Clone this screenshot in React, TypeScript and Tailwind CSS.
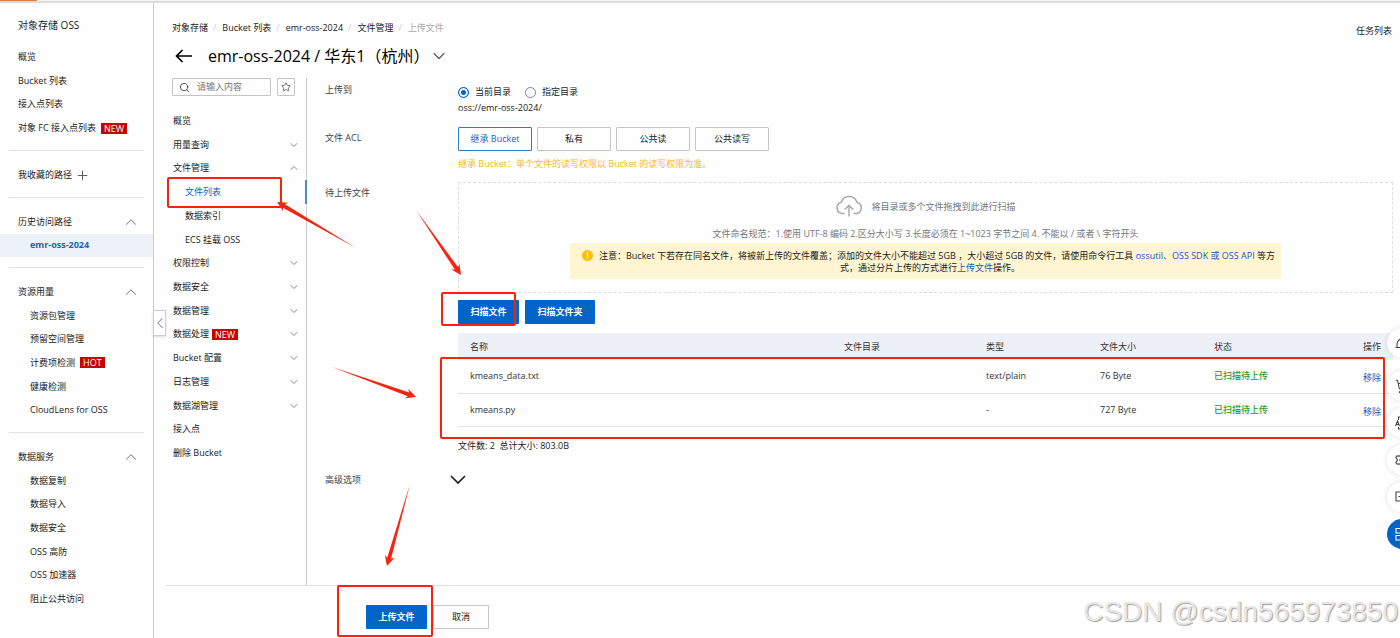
import { useState } from "react";
import type { ReactNode } from "react";
import { ChevronDown, ChevronLeft, ChevronUp, Plus, Search, Settings, ShoppingCart, Star } from "lucide-react";

function Badge({ children }: { children: ReactNode }) {
  return (
    <span className="flex h-[11px] items-center bg-[#c80000] px-[3px] text-[9px] leading-none text-white">
      {children}
    </span>
  );
}

type Item = { label: string; badge?: string };

function SideGroup({
  title,
  items,
  className,
  activeLabel,
}: {
  title: string;
  items: Item[];
  className: string;
  activeLabel?: string;
}) {
  return (
    <section className={`flex flex-col ${className}`}>
      <button type="button" className="flex flex-1 items-center justify-between pr-[13px] pl-[18px]">
        {title}
        <ChevronUp size={18} strokeWidth={1.4} className="text-[#888]" />
      </button>
      {items.map((item) => (
        <a
          key={item.label}
          href="#"
          className={
            item.label === activeLabel
              ? "flex flex-1 items-center bg-[#edf2f8] pl-[30px] font-bold text-[#1b63bd]"
              : "flex flex-1 items-center gap-[5px] pl-[30px]"
          }
        >
          {item.label}
          {item.badge && <Badge>{item.badge}</Badge>}
        </a>
      ))}
    </section>
  );
}

function Separator() {
  return <hr className="mx-[9px] mt-[10px] mb-[12px] border-[#e2e2e2]" />;
}

function Sidebar() {
  const top: Item[] = [
    { label: "概览" },
    { label: "Bucket 列表" },
    { label: "接入点列表" },
    { label: "对象 FC 接入点列表", badge: "NEW" },
  ];
  return (
    <aside className="relative w-[154px] shrink-0 border-r border-[#ccc]">
      <h1 className="pt-[10px] pl-[18px] text-[10px] leading-[24px]">对象存储 OSS</h1>
      <nav className="mt-[8px] flex flex-col">
        <div className="flex h-[95px] flex-col">
          {top.map((item) => (
            <a key={item.label} href="#" className="flex flex-1 items-center gap-[5px] pl-[18px]">
              {item.label}
              {item.badge && <Badge>{item.badge}</Badge>}
            </a>
          ))}
        </div>
        <Separator />
        <div className="flex h-[24px] items-center gap-[3px] pl-[18px]">
          我收藏的路径
          <button type="button" aria-label="添加路径">
            <Plus size={15} strokeWidth={1.5} className="text-[#555]" />
          </button>
        </div>
        <Separator />
        <SideGroup
          title="历史访问路径"
          className="h-[47px]"
          activeLabel="emr-oss-2024"
          items={[{ label: "emr-oss-2024" }]}
        />
        <Separator />
        <SideGroup
          title="资源用量"
          className="h-[142px]"
          items={[
            { label: "资源包管理" },
            { label: "预留空间管理" },
            { label: "计费项检测", badge: "HOT" },
            { label: "健康检测" },
            { label: "CloudLens for OSS" },
          ]}
        />
        <Separator />
        <SideGroup
          title="数据服务"
          className="h-[166px]"
          items={[
            { label: "数据复制" },
            { label: "数据导入" },
            { label: "数据安全" },
            { label: "OSS 高防" },
            { label: "OSS 加速器" },
            { label: "阻止公共访问" },
          ]}
        />
      </nav>
      <button
        type="button"
        aria-label="收起侧栏"
        className="absolute top-[307px] left-[153px] flex h-[26px] w-[13px] items-center justify-center border border-[#ccc] bg-white text-[#888] shadow-sm"
      >
        <ChevronLeft size={18} strokeWidth={1.4} className="shrink-0" />
      </button>
    </aside>
  );
}

type BucketItem = { label: string; badge?: string; open?: boolean; child?: boolean; active?: boolean };

const bucketItems: BucketItem[] = [
  { label: "概览" },
  { label: "用量查询", open: false },
  { label: "文件管理", open: true },
  { label: "文件列表", child: true, active: true },
  { label: "数据索引", child: true },
  { label: "ECS 挂载 OSS", child: true },
  { label: "权限控制", open: false },
  { label: "数据安全", open: false },
  { label: "数据管理", open: false },
  { label: "数据处理", open: false, badge: "NEW" },
  { label: "Bucket 配置", open: false },
  { label: "日志管理", open: false },
  { label: "数据湖管理", open: false },
  { label: "接入点" },
  { label: "删除 Bucket" },
];

function BucketNav() {
  return (
    <div className="w-[141px] shrink-0 border-r border-[#ccc] pl-[6px]">
      <div className="flex gap-[6px]">
        <label className="flex h-[18px] w-[99px] items-center gap-[7px] rounded-[1px] border border-[#c4c4c4] pl-[6px]">
          <Search size={11} strokeWidth={2} className="shrink-0 text-[#444]" />
          <input
            aria-label="搜索"
            placeholder="请输入内容"
            className="w-full min-w-0 bg-transparent outline-none placeholder:text-[#777]"
          />
        </label>
        <button
          type="button"
          aria-label="收藏"
          className="flex h-[18px] w-[18px] items-center justify-center rounded-[1px] border border-[#c4c4c4] text-[#555]"
        >
          <Star size={10} strokeWidth={2} />
        </button>
      </div>
      <nav className="mt-[13px] flex h-[356px] flex-col">
        {bucketItems.map((item) => (
          <a
            key={item.label}
            href="#"
            className={`flex flex-1 items-center gap-[3px] ${item.child ? "pl-[13px]" : "pl-px"} ${
              item.active ? "-mr-px border-r-2 border-[#4a8cc4] text-[#0f62c4]" : "pr-[6px]"
            }`}
          >
            {item.label}
            {item.badge && <Badge>{item.badge}</Badge>}
            {item.open === false && (
              <ChevronDown size={12} strokeWidth={1.8} className="ml-auto text-[#777]" />
            )}
            {item.open === true && <ChevronUp size={12} strokeWidth={1.8} className="ml-auto text-[#777]" />}
          </a>
        ))}
      </nav>
    </div>
  );
}

function Row({ label, children, className }: { label: string; children: ReactNode; className: string }) {
  return (
    <div className={`flex ${className}`}>
      <div className="w-[133px] shrink-0 text-[#444]">{label}</div>
      <div className="min-w-0 flex-1">{children}</div>
    </div>
  );
}

const files = [
  { name: "kmeans_data.txt", type: "text/plain", size: "76 Byte" },
  { name: "kmeans.py", type: "-", size: "727 Byte" },
];

function FileTable() {
  return (
    <table className="mt-[9px] w-full table-fixed border-collapse text-left text-[#333]">
      <thead>
        <tr className="h-[27px] bg-[#edf1f7]">
          <th className="pl-[12px] font-normal">名称</th>
          <th className="w-[142px] pl-[12px] font-normal">文件目录</th>
          <th className="w-[114px] pl-[12px] font-normal">类型</th>
          <th className="w-[114px] pl-[12px] font-normal">文件大小</th>
          <th className="w-[149px] pl-[12px] font-normal">状态</th>
          <th className="w-[42px] pl-[12px] font-normal">操作</th>
        </tr>
      </thead>
      <tbody>
        {files.map((f) => (
          <tr key={f.name} className="h-[33px] border-b border-[#e2e2e2]">
            <td className="pl-[12px]">{f.name}</td>
            <td />
            <td className="pl-[12px]">{f.type}</td>
            <td className="pl-[12px]">{f.size}</td>
            <td className="pl-[12px] font-medium text-[#1a9c1a]">已扫描待上传</td>
            <td className="pt-[4px] pl-[12px]">
              <button type="button" className="text-[#1b57b5]">
                移除
              </button>
            </td>
          </tr>
        ))}
      </tbody>
    </table>
  );
}

const primary = "h-[24px] rounded-[1px] bg-[#0064c8] font-bold text-white";
const link = "text-[#1b57b5]";

function Radio({ label, checked, onSelect }: { label: string; checked: boolean; onSelect: () => void }) {
  return (
    <label className="flex items-center gap-[6px]">
      <input
        type="radio"
        name="target"
        checked={checked}
        onChange={onSelect}
        className="h-[11px] w-[11px] appearance-none rounded-full border border-[#6a86b8] bg-white checked:border-[#0064c8] checked:bg-[#0064c8] checked:shadow-[inset_0_0_0_2px_#fff]"
      />
      {label}
    </label>
  );
}

function UploadForm() {
  const [target, setTarget] = useState("当前目录");
  const [acl, setAcl] = useState("继承 Bucket");
  return (
    <form className="min-w-0 flex-1 pr-[7px] pl-[18px]" onSubmit={(e) => e.preventDefault()}>
      <Row label="上传到" className="h-[48px] pt-[6px]">
        <div className="flex items-center gap-[14px] pt-[2px]">
          {["当前目录", "指定目录"].map((t) => (
            <Radio key={t} label={t} checked={t === target} onSelect={() => setTarget(t)} />
          ))}
        </div>
        <div className="mt-[4px]">oss://emr-oss-2024/</div>
      </Row>
      <Row label="文件 ACL" className="h-[56px] pt-[6px]">
        <div className="-mt-[5px] flex gap-[5px]">
          {["继承 Bucket", "私有", "公共读", "公共读写"].map((a) => (
            <button
              key={a}
              type="button"
              onClick={() => setAcl(a)}
              className={`h-[24px] w-[74px] rounded-[1px] border ${
                a === acl ? "border-[#2d7dc8] text-[#1b63bd]" : "border-[#c4c4c4]"
              }`}
            >
              {a}
            </button>
          ))}
        </div>
        <p className="mt-[7px] text-[#f8b62a]">继承 Bucket：单个文件的读写权限以 Bucket 的读写权限为准。</p>
      </Row>
      <Row label="待上传文件" className="pt-[5px]">
        <div className="-mt-[5px] flex h-[111px] flex-col items-center border border-dashed border-[#dedede] pt-[12px]">
          <div className="flex items-center gap-[8px] text-[#777]">
            <svg width="28" height="24" viewBox="0 0 28 24" fill="none" stroke="#aaa" strokeWidth="1.5">
              <path d="M9.5 18.5H7A5.8 5.8 0 0 1 6.2 7.2 8.3 8.3 0 0 1 22 7.2 5.8 5.8 0 0 1 21.5 18.5H18.5" />
              <path d="M14 21.5V10.5M9.8 14.5 14 10.2 18.2 14.5" />
            </svg>
            将目录或多个文件拖拽到此进行扫描
          </div>
          <p className="mt-[9px] text-[#777]">
            文件命名规范：1.使用 UTF-8 编码 2.区分大小写 3.长度必须在 1~1023 字节之间 4. 不能以 / 或者 \ 字符开头
          </p>
          <div className="mt-[3px] flex h-[36px] w-[711px] gap-[6px] rounded-[1px] bg-[#fff5d1] pt-[7px] pr-[20px] pl-[12px]">
            <svg width="11" height="11" viewBox="0 0 11 11" className="shrink-0">
              <circle cx="5.5" cy="5.5" r="5.5" fill="#fac00a" />
              <path d="M5.5 2.2V6.2M5.5 7.4V8.8" stroke="#fff" strokeWidth="1.3" />
            </svg>
            <p className="min-w-0 flex-1 text-center whitespace-nowrap">
              注意：Bucket 下若存在同名文件，将被新上传的文件覆盖；添加的文件大小不能超过 5GB ，大小超过 5GB
              的文件，请使用命令行工具{" "}
              <a href="#" className={link}>
                ossutil
              </a>
              <span className={link}>、</span>
              <a href="#" className={link}>
                OSS SDK 或 OSS API
              </a>{" "}
              等方
              <br />
              式，通过分片上传的方式进行
              <a href="#" className={link}>
                上传文件
              </a>
              操作。
            </p>
          </div>
        </div>
        <div className="mt-[7px] flex gap-[6px]">
          <button type="button" className={`w-[61px] ${primary}`}>
            扫描文件
          </button>
          <button type="button" className={`w-[70px] ${primary}`}>
            扫描文件夹
          </button>
        </div>
        <FileTable />
        <p className="mt-[13px] whitespace-pre">文件数: 2  总计大小: 803.0B</p>
      </Row>
      <Row label="高级选项" className="pt-[22px]">
        <button type="button" aria-label="展开高级选项" className="-ml-[9px] block">
          <svg width="18" height="12" viewBox="0 0 18 12" fill="none" stroke="#222" strokeWidth="1.7">
            <path d="M2 2 9 9 16 2" />
          </svg>
        </button>
      </Row>
    </form>
  );
}

function Arrow({ from, to }: { from: [number, number]; to: [number, number] }) {
  const length = Math.hypot(to[0] - from[0], to[1] - from[1]);
  const ux = (to[0] - from[0]) / length;
  const uy = (to[1] - from[1]) / length;
  const at = (back: number, side: number) =>
    `${to[0] - ux * back - uy * side},${to[1] - uy * back + ux * side}`;
  const points = [at(length, 0), at(8, 2), at(10, 5), at(0, 0), at(10, -5), at(8, -2)].join(" ");
  return <polygon points={points} fill="#f8230f" />;
}

function Annotations() {
  return (
    <svg
      className="pointer-events-none absolute top-0 left-0"
      width="1400"
      height="638"
      fill="none"
      stroke="#f8230f"
      strokeWidth="2"
    >
      <rect x="168" y="178" width="113" height="29" rx="1" />
      <rect x="442" y="293" width="73" height="32" rx="1" />
      <rect x="441" y="358" width="943" height="80" rx="1" />
      <rect x="338" y="586" width="94" height="50" rx="1" />
      <g stroke="none">
        <Arrow from={[356, 248]} to={[277, 202]} />
        <Arrow from={[416, 210]} to={[461, 275]} />
        <Arrow from={[332, 367]} to={[416, 397]} />
        <Arrow from={[410, 484]} to={[387, 566]} />
      </g>
    </svg>
  );
}

function Glyph({ d }: { d: string }) {
  return (
    <svg width="14" height="14" viewBox="0 0 14 14" fill="none" stroke="currentColor" strokeWidth="1.1">
      <path d={d} />
    </svg>
  );
}

function FloatingTools() {
  const round = "flex h-[30px] w-[30px] items-center justify-center rounded-full";
  const light = `${round} bg-white text-[#444] shadow-[0_0_5px_rgba(0,0,0,0.13)]`;
  const tools = [
    { label: "购物车", icon: <ShoppingCart size={15} strokeWidth={1.7} /> },
    { label: "应用", icon: <Glyph d="M3.5 4V1H11V13H3.5V11M.5 10 2.5 5 4.5 10M1.2 8.5H3.8" /> },
    { label: "设置", icon: <Settings size={16} strokeWidth={1.7} /> },
    { label: "反馈", icon: <Glyph d="M1 2H13V11H9L7 13 5 11H1ZM3.5 6.5H5M6.5 6.5H8M9.5 6.5H11" /> },
  ];
  return (
    <div className="absolute top-[328px] -right-[17px] flex flex-col gap-[7px]">
      <button type="button" aria-label="通知" className={`mb-[6px] ${light}`}>
        <Glyph d="M.5 11.5H13.5M2 11.5V8.5A5 5.5 0 0 1 12 8.5V11.5M7 3V1.5" />
      </button>
      {tools.map((t) => (
        <button key={t.label} type="button" aria-label={t.label} className={light}>
          {t.icon}
        </button>
      ))}
      <button type="button" aria-label="全部工具" className={`${round} bg-[#0064c8] text-white`}>
        <Glyph d="M1 1.5H6V6H1ZM1 8.5H6V13H1ZM8.5 1.5H13V6H8.5ZM8.5 8.5H13V13H8.5Z" />
      </button>
    </div>
  );
}

export default function App() {
  const crumbs = ["对象存储", "Bucket 列表", "emr-oss-2024", "文件管理"];
  return (
    <div className="relative flex min-h-screen flex-col overflow-hidden bg-[#fefefe] font-['Open_Sans','Noto_Sans_CJK_SC',sans-serif] text-[9px] leading-[12px] text-[#222]">
      <div className="flex h-[3px] border-b-2 border-[#dcdcdc] bg-[#f2f2f2]">
        <div className="h-px w-[37px] bg-[#e07a3c]" />
      </div>
      <div className="flex flex-1">
        <Sidebar />
        <main className="flex min-w-0 flex-1 flex-col pl-[12px]">
          <header className="flex justify-between pr-[8px] pl-[6px]">
            <div>
              <nav aria-label="路径" className="mt-[19px] flex gap-[6px]">
                {crumbs.map((c) => (
                  <span key={c} className="flex gap-[5px]">
                    <a href="#">{c}</a>
                    <span className="text-[#ccc]">/</span>
                  </span>
                ))}
                <span className="text-[#aaa]">上传文件</span>
              </nav>
              <div className="mt-[10px] flex h-[24px] items-center">
                <button type="button" aria-label="返回" className="pl-[3px]">
                  <svg width="18" height="14" viewBox="0 0 18 14" fill="none" stroke="#000" strokeWidth="1.7">
                    <path d="M17 7H1.5M7.5 1 1.5 7 7.5 13" />
                  </svg>
                </button>
                <h2 className="ml-[15px] text-[16px] leading-[24px] text-black">
                  emr-oss-2024 / 华东1（杭州）
                </h2>
                <button type="button" aria-label="切换 Bucket" className="text-[#555]">
                  <ChevronDown size={20} strokeWidth={1.3} />
                </button>
              </div>
            </div>
            <a href="#" className="mt-[22px]">
              任务列表
            </a>
          </header>
          <div className="mt-[10px] flex flex-1">
            <BucketNav />
            <UploadForm />
          </div>
          <footer className="flex h-[53px] items-start gap-[6px] border-t border-[#e0e0e0] pt-[19px] pl-[200px]">
            <button type="button" className={`w-[61px] ${primary}`}>
              上传文件
            </button>
            <button type="button" className="h-[24px] w-[56px] border border-[#c8c8c8]">
              取消
            </button>
          </footer>
        </main>
      </div>
      <FloatingTools />
      <Annotations />
      <div className="pointer-events-none absolute right-[2px] bottom-[10px] font-['Liberation_Sans',sans-serif] text-[28px] leading-[32px] text-[#e6e6e6] [text-shadow:1px_1px_1px_#a0a0a0]">
        CSDN @csdn565973850
      </div>
    </div>
  );
}
